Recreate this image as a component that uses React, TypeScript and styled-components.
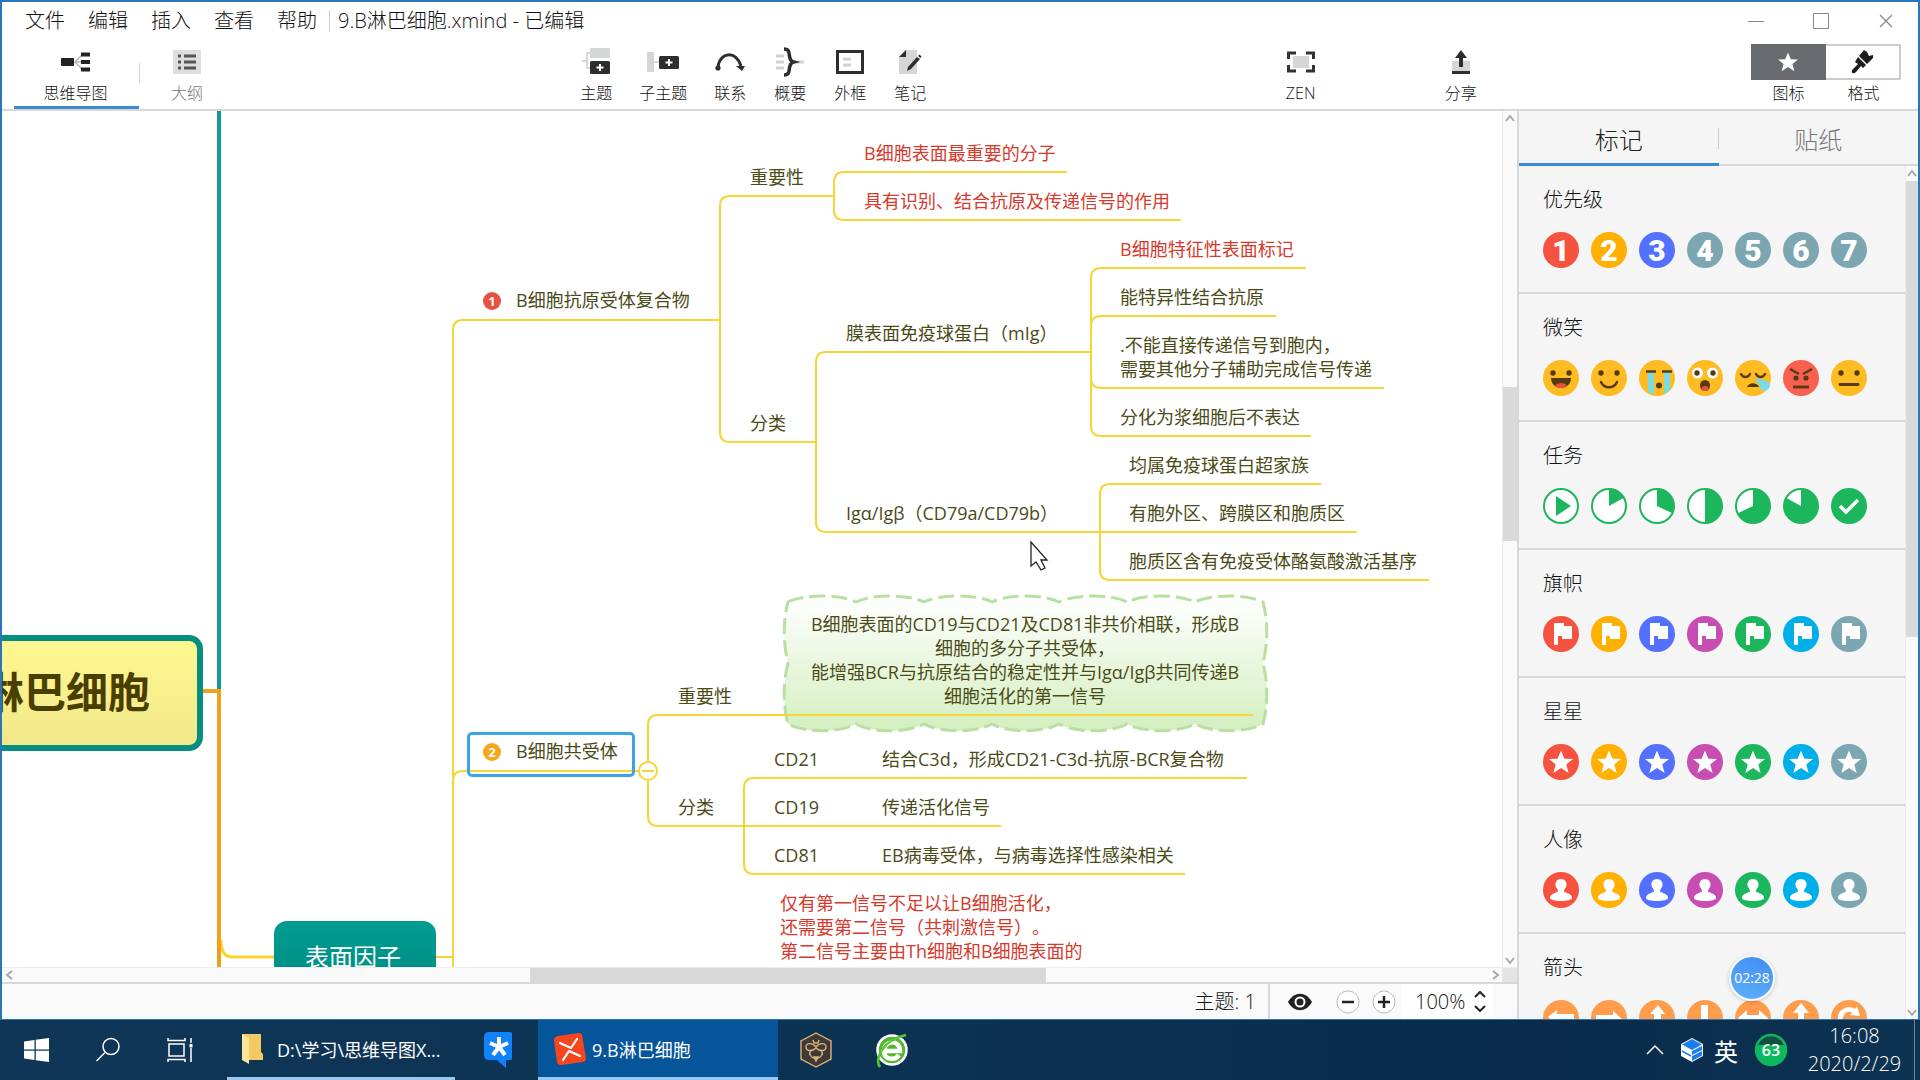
import React from "react";
import styled, { createGlobalStyle, css } from "styled-components";

const GlobalStyle = createGlobalStyle`
  * { box-sizing: border-box; }
  body { margin: 0; overflow: hidden; }
  button, input {
    font: inherit;
    color: inherit;
    margin: 0;
    padding: 0;
    border: 0;
    background: none;
  }
  svg { display: block; flex: none; }
`;

const LINE = "#f6d637";
const INK = "#4b4b17";
const RED = "#d63a2c";
const RULE = "#d8d8d8";
const FONT = `"Open Sans", "Noto Sans CJK SC", sans-serif`;

/* ---------- Shell ---------- */

const Screen = styled.div`
  position: relative;
  display: flex;
  flex-direction: column;
  height: 100vh;
  font-family: ${FONT};
  font-weight: 300;
  color: #111;
  background: #fff;
  overflow: hidden;
  text-spacing-trim: space-all;
`;

const AppWindow = styled.div`
  flex: 1;
  min-height: 0;
  display: flex;
  flex-direction: column;
  border: solid #2a74b8;
  border-width: 2px 2px 1px 2px;
`;

const Header = styled.header`
  flex: none;
  border-bottom: 2px solid ${RULE};
`;

const TitleRow = styled.div`
  display: flex;
  align-items: center;
  height: 36px;
  padding: 2px 0 0 23px;
  font-size: 20px;
  line-height: 28px;
`;

const Menu = styled.nav`
  display: flex;
  gap: 23px;
`;

const FileTitle = styled.h1`
  flex: 1;
  display: flex;
  align-items: center;
  gap: 8px;
  margin: 0 0 0 12px;
  font-size: 20px;
  font-weight: 300;
  white-space: nowrap;
  &::before {
    content: "";
    width: 1px;
    height: 22px;
    background: #ccc;
  }
`;

const WindowButton = styled.button`
  display: grid;
  place-items: center;
  width: 65px;
  height: 34px;
`;

const Toolbar = styled.div`
  display: flex;
  padding: 0 17px 0 12px;
  height: 71px;
`;

const Spacer = styled.div<{ $grow: number }>`
  flex: ${(p) => p.$grow} 0 0;
`;

const ToolButton = styled.button<{ $muted?: boolean }>`
  display: flex;
  flex-direction: column;
  align-items: center;
  gap: 2px;
  min-width: 60px;
  padding: 6px 13px 0;
  font-size: 16px;
  line-height: 22px;
  white-space: nowrap;
  color: ${(p) => (p.$muted ? "#777" : "#111")};
`;

const IconSlot = styled.span`
  display: grid;
  place-items: center;
  height: 36px;
`;

const ViewTab = styled(ToolButton)<{ $active?: boolean }>`
  width: ${(p) => (p.$active ? "125px" : "96px")};
  padding: 6px 2px 0 0;
  border-bottom: 3px solid ${(p) => (p.$active ? "#3b8ad2" : "transparent")};
`;

const TabRule = styled.span`
  width: 1px;
  height: 20px;
  margin-top: 25px;
  background: #d4d4d4;
`;

const ToggleButton = styled.button<{ $active?: boolean }>`
  display: flex;
  flex-direction: column;
  align-items: center;
  gap: 2px;
  width: 75px;
  padding-top: 6px;
  font-size: 16px;
  line-height: 22px;
  ${IconSlot} {
    width: 100%;
    border: 2px solid ${(p) => (p.$active ? "#696c6e" : "#ccc")};
    border-left-width: ${(p) => (p.$active ? "2px" : "0")};
    background: ${(p) => (p.$active ? "#696c6e" : "#fff")};
  }
`;

const Body = styled.div`
  flex: 1;
  min-height: 0;
  display: flex;
`;

const Workspace = styled.main`
  flex: 1;
  min-width: 0;
  display: flex;
  flex-direction: column;
`;

const CanvasRow = styled.div`
  flex: 1;
  min-height: 0;
  display: flex;
`;

/* ---------- Scroll bars ---------- */

const VBar = styled.div<{ $w: number }>`
  display: flex;
  flex-direction: column;
  align-items: center;
  width: ${(p) => p.$w}px;
  background: #fafafa;
  border-left: 1px solid #ececec;
`;

const HBar = styled.div`
  display: flex;
  align-items: center;
  height: 15px;
  background: #fafafa;
  border-top: 1px solid #ececec;
`;

const Thumb = styled.div<{ $grow: number }>`
  flex: ${(p) => p.$grow} 0 0;
  align-self: stretch;
  background: #d9d9d9;
`;

const Track = styled.div<{ $grow: number }>`
  flex: ${(p) => p.$grow} 0 0;
`;

const Corner = styled.span`
  width: 15px;
  align-self: stretch;
  background: #e4e4e4;
`;

const ScrollArrow = styled.button`
  display: grid;
  place-items: center;
  width: 15px;
  height: 15px;
  flex: none;
`;

/* ---------- Mind map ---------- */

const Canvas = styled.section`
  position: relative;
  flex: 1;
  min-width: 0;
  overflow: hidden;
`;

const Board = styled.div`
  position: absolute;
  left: -2px;
  top: -111px;
  width: 1502px;
  height: 1080px;
  color: ${INK};
  font-size: 18px;
  font-weight: 400;
  line-height: 24px;
`;

const Wires = styled.svg`
  position: absolute;
  left: 0;
  top: 0;
`;

const Topic = styled.div<{ $x: number; $y: number; $red?: boolean; $w?: number }>`
  position: absolute;
  left: ${(p) => p.$x}px;
  top: ${(p) => p.$y}px;
  white-space: pre;
  ${(p) => p.$red && css`color: ${RED};`}
  ${(p) => p.$w && css`width: ${p.$w}px; text-align: center;`}
`;

const RootTopic = styled.div`
  position: absolute;
  left: -98px;
  top: 635px;
  width: 301px;
  height: 116px;
  display: flex;
  align-items: center;
  justify-content: flex-end;
  padding: 0 47px 3px 0;
  border: 6px solid #068f80;
  border-radius: 14px;
  background: linear-gradient(#fff890, #f1e78b);
  color: #4b3f00;
  font-size: 42px;
  font-weight: 700;
  white-space: nowrap;
`;

const MainTopic = styled.div`
  position: absolute;
  left: 274px;
  top: 921px;
  width: 162px;
  height: 72px;
  display: flex;
  align-items: center;
  justify-content: center;
  padding-right: 4px;
  border-radius: 13px;
  background: linear-gradient(#009c92, #008c80);
  color: #fff;
  font-size: 24px;
`;

const SelectionBox = styled.div`
  position: absolute;
  left: 467px;
  top: 732px;
  width: 168px;
  height: 45px;
  border: 3px solid #3da5e6;
  border-radius: 5px;
`;

const Badge = styled.span<{ $x: number; $y: number; $bg: string }>`
  position: absolute;
  left: ${(p) => p.$x}px;
  top: ${(p) => p.$y}px;
  width: 18px;
  height: 18px;
  border-radius: 50%;
  background: ${(p) => p.$bg};
  color: #fff;
  font-size: 13px;
  font-weight: 700;
  line-height: 18px;
  text-align: center;
`;

/* ---------- Status bar ---------- */

const StatusBar = styled.footer`
  display: flex;
  align-items: center;
  justify-content: flex-end;
  height: 37px;
  padding-right: 24px;
  border-top: 2px solid ${RULE};
  background: #fafafa;
  font-size: 20px;
  line-height: 28px;
`;

const TopicCount = styled.span`
  display: flex;
  align-items: center;
  height: 100%;
  padding-right: 12px;
  border-right: 2px solid ${RULE};
`;

const StatusButton = styled.button<{ $w: number }>`
  display: grid;
  place-items: center;
  width: ${(p) => p.$w}px;
  height: 100%;
`;

const ZoomBox = styled.label`
  display: flex;
  align-items: center;
  height: 100%;
  width: 91px;
  padding-left: 13px;
  background: #fff;
  input { width: 53px; outline: 0; }
`;

const Stepper = styled.span`
  display: flex;
  flex-direction: column;
  gap: 7px;
  margin-left: 6px;
`;

/* ---------- Marker panel ---------- */

const Panel = styled.aside`
  display: flex;
  flex-direction: column;
  width: 401px;
  border-left: 2px solid ${RULE};
  background: #f5f5f5;
`;

const PanelTabs = styled.div`
  flex: none;
  display: flex;
  height: 55px;
  border-bottom: 2px solid ${RULE};
`;

const PanelTab = styled.button<{ $active?: boolean }>`
  position: relative;
  flex: 1;
  height: 55px;
  padding-top: 3px;
  font-size: 24px;
  line-height: 52px;
  color: ${(p) => (p.$active ? "#222" : "#777")};
  border-bottom: 3px solid ${(p) => (p.$active ? "#3b8ad2" : "transparent")};
  ${(p) =>
    p.$active &&
    css`
      &::after {
        content: "";
        position: absolute;
        right: 0;
        top: 17px;
        width: 1px;
        height: 21px;
        background: #ccc;
      }
    `}
`;

const PanelScroll = styled.div`
  flex: 1;
  min-height: 0;
  display: flex;
`;

const Groups = styled.div`
  flex: 1;
  overflow: hidden;
`;

const Group = styled.section`
  padding: 20px 0 24px 24px;
  border-bottom: 2px solid ${RULE};
  h2 {
    margin: 0 0 18px;
    font-size: 20px;
    font-weight: 300;
    line-height: 28px;
  }
`;

const MarkerRow = styled.div`
  display: flex;
  gap: 12px;
`;

const MarkerButton = styled.button`
  width: 36px;
  height: 36px;
`;

const Priority = styled.span<{ $bg: string }>`
  display: block;
  width: 36px;
  height: 36px;
  border-radius: 50%;
  background: ${(p) => p.$bg};
  color: #fff;
  font-family: Roboto, "Open Sans", sans-serif;
  font-size: 30px;
  font-weight: 900;
  line-height: 37px;
  text-align: center;
`;

/* ---------- Taskbar ---------- */

const Taskbar = styled.div`
  flex: none;
  display: flex;
  align-items: stretch;
  height: 60px;
  background: linear-gradient(90deg, #0f3656 0%, #0c3252 50%, #0a2b4b 80%, #0d3352 100%);
  color: #fff;
  font-size: 18px;
`;

const TaskIcon = styled.button<{ $w?: number }>`
  display: grid;
  place-items: center;
  width: ${(p) => p.$w ?? 75}px;
`;

const TaskItem = styled.button<{ $active?: boolean }>`
  display: flex;
  align-items: center;
  gap: ${(p) => (p.$active ? "5px" : "14px")};
  width: ${(p) => (p.$active ? "240px" : "228px")};
  margin-left: ${(p) => (p.$active ? "0" : "11px")};
  padding: 1px 0 0 15px;
  border-bottom: 3px solid #9bc8f0;
  background: ${(p) => (p.$active ? "#06559b" : "none")};
  font-weight: 400;
  white-space: nowrap;
`;

const Tray = styled.div`
  flex: 1;
  display: flex;
  align-items: center;
  justify-content: flex-end;
`;

const Ime = styled.span`
  margin: 0 16px 0 3px;
  font-size: 24px;
  font-weight: 400;
`;

const Clock = styled.time`
  display: flex;
  flex-direction: column;
  align-items: center;
  width: 95px;
  margin: 0 12px 0 19px;
  font-size: 20px;
  line-height: 28px;
`;

const DesktopEdge = styled.span`
  width: 6px;
  align-self: stretch;
  border-left: 1px solid #6f8799;
`;

const Timer = styled.div`
  position: absolute;
  right: 145px;
  bottom: 79px;
  width: 46px;
  height: 46px;
  border: 2px solid #f4fbff;
  border-radius: 50%;
  background: linear-gradient(200deg, #3f8df5, #5fb0f7);
  box-shadow: 0 1px 4px rgba(0, 0, 0, 0.2);
  color: #fff;
  font-size: 14px;
  font-weight: 400;
  line-height: 42px;
  text-align: center;
`;

/* ---------- Drawings ---------- */

const Chevron = ({ dir }: { dir: "up" | "down" | "left" | "right" }) => {
  const d = { up: "M2 8 6 3 10 8", down: "M2 4 6 9 10 4", left: "M8 2 3 6 8 10", right: "M4 2 9 6 4 10" }[dir];
  return (
    <svg width="12" height="12" fill="none" stroke="#a9a9a9" strokeWidth="2">
      <path d={d} />
    </svg>
  );
};

const MapViewIcon = () => (
  <svg width="30" height="22">
    <path d="M12 11h9M14 11l7-7M14 11l7 7" stroke="#bbb" strokeWidth="1.500" fill="none" />
    <rect x="0" y="7" width="13" height="8" rx="1" fill="#222" />
    <path d="M20 3.500h9M20 11h9M20 18.500h9" stroke="#222" strokeWidth="4" />
  </svg>
);

const OutlineIcon = () => (
  <svg width="28" height="24">
    <rect width="28" height="24" fill="#dedede" />
    <path d="M5 6h3M5 12h3M5 18h3M11 6h12M11 12h12M11 18h12" stroke="#555" strokeWidth="3" />
  </svg>
);

const TopicIcon = () => (
  <svg width="28" height="28">
    <path d="M0 13h5M9 5H5v15h4" stroke="#ccc" strokeWidth="1.500" fill="none" />
    <rect x="8" y="0" width="20" height="10" rx="1" fill="#d5d6d6" />
    <rect x="8" y="13" width="20" height="13" rx="1.500" fill="#2e2e2e" />
    <path d="M18 16v7M14.500 19.500h7" stroke="#fff" strokeWidth="2" />
  </svg>
);

const SubtopicIcon = () => (
  <svg width="32" height="22">
    <rect x="0" y="1" width="7" height="20" fill="#d5d6d6" />
    <path d="M7 11h6" stroke="#ccc" strokeWidth="1.500" />
    <rect x="12" y="5" width="20" height="13" rx="1.500" fill="#2e2e2e" />
    <path d="M22 8v7M18.500 11.500h7" stroke="#fff" strokeWidth="2" />
  </svg>
);

const RelationIcon = () => (
  <svg width="30" height="20">
    <path d="M3 15C5-1 22-1 26 14" stroke="#2e2e2e" strokeWidth="3" fill="none" />
    <circle cx="3" cy="16" r="2.600" fill="#2e2e2e" />
    <path d="M21 14h9l-3 5z" fill="#2e2e2e" />
  </svg>
);

const SummaryIcon = () => (
  <svg width="28" height="30">
    <path d="M0 9h8M0 15h8M0 21h8M19 15h9" stroke="#d2d2d2" strokeWidth="3" />
    <path d="M8 2c9 0 2 11 9.500 13C10 17 17 28 8 28" stroke="#2e2e2e" strokeWidth="3.500" fill="none" />
  </svg>
);

const BoundaryIcon = () => (
  <svg width="28" height="24">
    <rect x="1.500" y="1.500" width="25" height="21" fill="#fff" stroke="#2e2e2e" strokeWidth="3" />
    <path d="M7 9h8M7 15h8" stroke="#d2d2d2" strokeWidth="3" />
  </svg>
);

const NoteIcon = () => (
  <svg width="24" height="26">
    <path d="M7 1h12v24H1V8z" fill="#d5d6d6" />
    <path d="M1 8h7V1z" fill="#2e2e2e" />
    <path d="M9 22l1-4L19 8l3 2-9 10z" fill="#2e2e2e" />
    <path d="M20 7l1.500-1.500 2 2L22.500 9z" fill="#2e2e2e" />
  </svg>
);

const ZenIcon = () => (
  <svg width="28" height="22">
    <rect x="6" y="5" width="16" height="12" fill="#d5d6d6" />
    <path d="M9 2H1.500v6M19 2h7.500v6M9 20H1.500v-6M19 20h7.500v-6" stroke="#333" strokeWidth="3" fill="none" />
  </svg>
);

const ShareIcon = () => (
  <svg width="20" height="26">
    <rect x="1" y="12" width="18" height="10" fill="#d5d6d6" />
    <rect x="1" y="22" width="18" height="3" fill="#2e2e2e" />
    <path d="M10 1l6 8h-4v9H8V9H4z" fill="#2e2e2e" />
  </svg>
);

const STAR = "M0-10 2.800-3.200 10-3 4.400 1.600 6.400 8.800 0 4.600-6.400 8.800-4.400 1.600-10-3-2.800-3.200z";

const StarIcon = () => (
  <svg width="22" height="20" viewBox="-11 -10.500 22 20">
    <path d={STAR} fill="#fff" />
  </svg>
);

const BrushIcon = () => (
  <svg width="24" height="24" fill="#1d1d1d">
    <path d="M14 0l3 2 2 4 4-1 0 3-6 6-8-8z" />
    <path d="M8 7l8 8-3 3-2-2-5 6c-3 3-6 0-3-3l5-5-3-2z" />
  </svg>
);

const GREEN = "#1cb65d";
const TONES = ["#f5533f", "#ffb000", "#5470ff", "#c74db3", GREEN, "#00aeea", "#7ca7b2"];

const Disc = ({ fill, children }: { fill: string; children?: React.ReactNode }) => (
  <svg width="36" height="36" viewBox="-18 -18 36 36">
    <circle r="18" fill={fill} />
    {children}
  </svg>
);

const Eyes = () => (
  <g fill="#553b10">
    <circle cx="-8" cy="-5" r="2.700" />
    <circle cx="8" cy="-5" r="2.700" />
  </g>
);

const BROWN = "#553b10";
const AMBER = "#ffbb22";

const smileys = [
  ["大笑", <Disc fill={AMBER}><Eyes /><path d="M-10 0H10C10 13-10 13-10 0z" fill={BROWN} /><path d="M-6 8c2-4 10-4 12 0-4 3-8 3-12 0z" fill="#e8503c" /></Disc>],
  ["微笑", <Disc fill={AMBER}><Eyes /><path d="M-8 4C-5 11 5 11 8 4" fill="none" stroke={BROWN} strokeWidth="2.500" strokeLinecap="round" /></Disc>],
  ["大哭", <Disc fill={AMBER}><path d="M-9-6h6v22l-6-1.500zM7-6h6v18l-6 4z" fill="#7adbe0" /><path d="M-11-6.500H-1M5-6.500H15" stroke={BROWN} strokeWidth="2.500" /><circle cx="2" cy="7.500" r="3" fill={BROWN} /></Disc>],
  ["惊讶", <Disc fill={AMBER}><circle cx="-7.500" cy="-5" r="5.500" fill="#fff" /><circle cx="7.500" cy="-5" r="5.500" fill="#fff" /><Eyes /><ellipse cy="7.500" rx="5" ry="5.500" fill={BROWN} /><ellipse cy="10.500" rx="3.500" ry="2.500" fill="#e8503c" /></Disc>],
  ["难过", <Disc fill={AMBER}><path d="M-12-4c2 4 7 4 9 0M3-4c2 4 7 4 9 0" fill="none" stroke={BROWN} strokeWidth="2.400" strokeLinecap="round" /><path d="M-6 9c2-5 10-5 12 0z" fill={BROWN} /><path d="M1 0c8 1 15 2 16 7-1 6-6 7-8 5C6 9 5 4 1 0z" fill="#7adbe0" /></Disc>],
  ["生气", <Disc fill="#f9604f"><path d="M-11-9l9 5M11-9l-9 5" stroke={BROWN} strokeWidth="2.400" /><circle cx="-5" cy="0" r="2.600" fill={BROWN} /><circle cx="5" cy="0" r="2.600" fill={BROWN} /><path d="M-8 9H8" stroke={BROWN} strokeWidth="2.800" /></Disc>],
  ["平静", <Disc fill={AMBER}><Eyes /><path d="M-9 6.500H9" stroke={BROWN} strokeWidth="2.800" strokeLinecap="round" /></Disc>],
] as [string, React.ReactNode][];

const Pie = ({ part }: { part: number }) => {
  const a = part * Math.PI * 2;
  const end = `${17 * Math.sin(a)} ${-17 * Math.cos(a)}`;
  return (
    <svg width="36" height="36" viewBox="-18 -18 36 36">
      <circle r="17" fill="#fff" stroke={GREEN} strokeWidth="2" />
      <path d={`M0 0V-17A17 17 0 ${part > 0.5 ? 1 : 0} 1 ${end}z`} fill={GREEN} />
    </svg>
  );
};

const tasks = [
  ["开始", <svg width="36" height="36" viewBox="-18 -18 36 36"><circle r="17" fill="#fff" stroke={GREEN} strokeWidth="2" /><path d="M-5-10 10 0-5 10z" fill={GREEN} /></svg>],
  ["八分之一", <Pie part={0.17} />],
  ["八分之三", <Pie part={0.32} />],
  ["一半", <Pie part={0.5} />],
  ["八分之五", <Pie part={0.68} />],
  ["八分之七", <Pie part={0.83} />],
  ["完成", <Disc fill={GREEN}><path d="M-9 0-3 6 9-6" fill="none" stroke="#fff" strokeWidth="3.500" /></Disc>],
] as [string, React.ReactNode][];

const flag = <path d="M-7-11H3v3h8V5H1V2H-3V11H-7z" fill="#fff" />;
const star = <path d={STAR} fill="#fff" transform="translate(0 0.500) scale(1.200)" />;
const person = <path d="M0-11c4 0 6 3 5.500 6.500C5-2 3-1 3 1c0 2 8 2 8 7 0 2-5 3-11 3s-11-1-11-3c0-5 8-5 8-7 0-2-2-3-2.500-5.500C-6-8-4-11 0-11z" fill="#fff" />;

const ARROW = "M-13-1-4-8v4H13v7H-4V7z";
const arrowShapes = [
  <path d={ARROW} />,
  <path d={ARROW} transform="rotate(180)" />,
  <path d={ARROW} transform="rotate(90)" />,
  <path d={ARROW} transform="rotate(-90)" />,
  <path d="M-15 0-6-8v5H6v-5L15 0 6 8V3H-6V8z" />,
  <path d="M0-15 8-5H3V5H8L0 15-8 5H-3V-5H-8z" />,
  <path d="M-11 2A11 11 0 0 1 6-9L8-12 11-2 1-3 3-6A7 7 0 0 0-6 2 7 7 0 0 0 6 6L9 9A11 11 0 0 1-11 2z" />,
];

const groups: { title: string; items: [string, React.ReactNode][] }[] = [
  {
    title: "优先级",
    items: ["#f5533f", "#ffb000", "#5470ff", "#7ca7b2", "#7ca7b2", "#7ca7b2", "#7ca7b2"].map((c, i) => [
      `优先级 ${i + 1}`,
      <Priority $bg={c}>{i + 1}</Priority>,
    ]),
  },
  { title: "微笑", items: smileys },
  { title: "任务", items: tasks },
  { title: "旗帜", items: TONES.map((c, i) => [`旗帜 ${i + 1}`, <Disc fill={c}>{flag}</Disc>]) },
  { title: "星星", items: TONES.map((c, i) => [`星星 ${i + 1}`, <Disc fill={c}>{star}</Disc>]) },
  { title: "人像", items: TONES.map((c, i) => [`人像 ${i + 1}`, <Disc fill={c}>{person}</Disc>]) },
  {
    title: "箭头",
    items: arrowShapes.map((a, i) => [`箭头 ${i + 1}`, <Disc fill="#ff9d4d"><g fill="#fff">{a}</g></Disc>]),
  },
];

/* A branch leaves the vertical trunk at x, turns at height y and runs to x2. */
const Branch = ({ x, from, y, x2 }: { x: number; from: number; y: number; x2: number }) => {
  const r = y > from ? -10 : 10;
  return <path d={`M${x} ${from}V${y + r}Q${x} ${y} ${x + 10} ${y}H${x2}`} />;
};

const branches = [
  [453, 957, 320, 720],
  [453, 957, 771, 648],
  [720, 320, 196, 834],
  [720, 320, 442, 816],
  [834, 196, 172, 1067],
  [834, 196, 220, 1181],
  [816, 442, 352, 1091],
  [816, 442, 532, 1100],
  [1091, 352, 268, 1306],
  [1091, 352, 316, 1276],
  [1091, 352, 388, 1384],
  [1091, 352, 436, 1311],
  [1100, 532, 484, 1321],
  [1100, 532, 580, 1429],
  [648, 771, 715, 1253],
  [648, 771, 826, 1001],
  [744, 826, 778, 1247],
  [744, 826, 874, 1185],
];

const topics: { x: number; y: number; text: string; red?: boolean; w?: number }[] = [
  { x: 864, y: 141, text: "B细胞表面最重要的分子", red: true },
  { x: 864, y: 189, text: "具有识别、结合抗原及传递信号的作用", red: true },
  { x: 750, y: 165, text: "重要性" },
  { x: 516, y: 288, text: "B细胞抗原受体复合物" },
  { x: 750, y: 411, text: "分类" },
  { x: 846, y: 321, text: "膜表面免疫球蛋白（mIg）" },
  { x: 846, y: 501, text: "Igα/Igβ（CD79a/CD79b）" },
  { x: 1120, y: 237, text: "B细胞特征性表面标记", red: true },
  { x: 1120, y: 285, text: "能特异性结合抗原" },
  { x: 1120, y: 333, text: ".不能直接传递信号到胞内，\n需要其他分子辅助完成信号传递" },
  { x: 1120, y: 405, text: "分化为浆细胞后不表达" },
  { x: 1129, y: 453, text: "均属免疫球蛋白超家族" },
  { x: 1129, y: 501, text: "有胞外区、跨膜区和胞质区" },
  { x: 1129, y: 549, text: "胞质区含有免疫受体酪氨酸激活基序" },
  { x: 516, y: 739, text: "B细胞共受体" },
  { x: 678, y: 684, text: "重要性" },
  { x: 678, y: 795, text: "分类" },
  {
    x: 785,
    y: 612,
    w: 480,
    text: "B细胞表面的CD19与CD21及CD81非共价相联，形成B\n细胞的多分子共受体，\n能增强BCR与抗原结合的稳定性并与Igα/Igβ共同传递B\n细胞活化的第一信号",
  },
  { x: 774, y: 747, text: "CD21" },
  { x: 882, y: 747, text: "结合C3d，形成CD21-C3d-抗原-BCR复合物" },
  { x: 774, y: 795, text: "CD19" },
  { x: 882, y: 795, text: "传递活化信号" },
  { x: 774, y: 843, text: "CD81" },
  { x: 882, y: 843, text: "EB病毒受体，与病毒选择性感染相关" },
  { x: 780, y: 891, text: "仅有第一信号不足以让B细胞活化，\n还需要第二信号（共刺激信号）。\n第二信号主要由Th细胞和B细胞表面的", red: true },
];

const xs = [788, 856, 924, 992, 1059, 1127, 1195, 1263];
const cloud =
  "M788 602" +
  xs.slice(1).map((x, i) => `C${xs[i] + 16} 594 ${x - 16} 594 ${x} 602`).join("") +
  "C1268 620 1268 644 1263 663C1268 682 1268 706 1263 724" +
  xs.slice(0, 7).reverse().map((x, i) => `C${xs[7 - i] - 16} 733 ${x + 16} 733 ${x} 724`).join("") +
  "C783 706 783 682 788 663C783 644 783 620 788 602z";

const MindMap = () => (
  <Board>
    <Wires width="1502" height="1080" fill="none">
      <defs>
        <linearGradient id="cloudFill" x1="0" y1="0" x2="0" y2="1">
          <stop offset="0" stopColor="#ffffff" />
          <stop offset="1" stopColor="#d3efbf" />
        </linearGradient>
      </defs>
      <path d="M219 100V690" stroke="#169a96" strokeWidth="4" />
      <path d="M221 940Q221 957 232 957H276" stroke="#fad32c" strokeWidth="3" />
      <path d="M202 691H219V980" stroke="#f0a01c" strokeWidth="4" />
      <path d={cloud} fill="url(#cloudFill)" stroke="#b9dfa2" strokeWidth="3" strokeDasharray="16 6" />
      <g stroke={LINE} strokeWidth="2">
        <path d="M436 957H453V980M1100 532H1357" />
        {branches.map(([x, from, y, x2]) => (
          <Branch key={`${x}-${y}`} x={x} from={from} y={y} x2={x2} />
        ))}
        <circle cx="648" cy="771" r="9" fill="#fff" />
        <path d="M642 771H654" />
      </g>
    </Wires>
    <RootTopic>B淋巴细胞</RootTopic>
    <MainTopic>表面因子</MainTopic>
    <SelectionBox />
    <Badge $x={483} $y={292} $bg="#e8503f">1</Badge>
    <Badge $x={483} $y={743} $bg="#f5a81c">2</Badge>
    {topics.map((t) => (
      <Topic key={`${t.x}-${t.y}`} $x={t.x} $y={t.y} $red={t.red} $w={t.w}>
        {t.text}
      </Topic>
    ))}
    <Wires width="1502" height="1080">
      <path d="M1031 542v24l5-4 5 8 4-2-4-8h6z" fill="#fff" stroke="#222" strokeWidth="1.300" />
    </Wires>
  </Board>
);

const tools: [string, React.ReactNode][] = [
  ["主题", <TopicIcon />],
  ["子主题", <SubtopicIcon />],
  ["联系", <RelationIcon />],
  ["概要", <SummaryIcon />],
  ["外框", <BoundaryIcon />],
  ["笔记", <NoteIcon />],
];

const Tool = ({ label, icon }: { label: string; icon: React.ReactNode }) => (
  <ToolButton type="button">
    <IconSlot>{icon}</IconSlot>
    {label}
  </ToolButton>
);

export default function App() {
  return (
    <Screen>
      <GlobalStyle />
      <AppWindow>
        <Header>
          <TitleRow>
            <Menu>
              {["文件", "编辑", "插入", "查看", "帮助"].map((m) => (
                <button type="button" key={m}>{m}</button>
              ))}
            </Menu>
            <FileTitle>9.B淋巴细胞.xmind - 已编辑</FileTitle>
            <WindowButton type="button" aria-label="最小化">
              <svg width="16" height="16"><path d="M0 8.500h16" stroke="#888" /></svg>
            </WindowButton>
            <WindowButton type="button" aria-label="最大化">
              <svg width="16" height="16"><rect x="0.500" y="0.500" width="15" height="15" fill="none" stroke="#888" /></svg>
            </WindowButton>
            <WindowButton type="button" aria-label="关闭">
              <svg width="14" height="14"><path d="M1 1l12 12M13 1 1 13" stroke="#888" strokeWidth="1.300" /></svg>
            </WindowButton>
          </TitleRow>
          <Toolbar>
            <ViewTab type="button" $active>
              <IconSlot><MapViewIcon /></IconSlot>
              思维导图
            </ViewTab>
            <TabRule />
            <ViewTab type="button" $muted>
              <IconSlot><OutlineIcon /></IconSlot>
              大纲
            </ViewTab>
            <Spacer $grow={33} />
            {tools.map(([label, icon]) => (
              <Tool key={label} label={label} icon={icon} />
            ))}
            <Spacer $grow={33} />
            <Tool label="ZEN" icon={<ZenIcon />} />
            <Spacer $grow={10} />
            <Tool label="分享" icon={<ShareIcon />} />
            <Spacer $grow={26} />
            <ToggleButton type="button" $active>
              <IconSlot><StarIcon /></IconSlot>
              图标
            </ToggleButton>
            <ToggleButton type="button">
              <IconSlot><BrushIcon /></IconSlot>
              格式
            </ToggleButton>
          </Toolbar>
        </Header>

        <Body>
          <Workspace>
            <CanvasRow>
              <Canvas>
                <MindMap />
              </Canvas>
              <VBar $w={15}>
                <ScrollArrow type="button" aria-label="向上"><Chevron dir="up" /></ScrollArrow>
                <Track $grow={261} />
                <Thumb $grow={154} />
                <Track $grow={411} />
                <ScrollArrow type="button" aria-label="向下"><Chevron dir="down" /></ScrollArrow>
              </VBar>
            </CanvasRow>
            <HBar>
              <ScrollArrow type="button" aria-label="向左"><Chevron dir="left" /></ScrollArrow>
              <Track $grow={513} />
              <Thumb $grow={516} />
              <Track $grow={441} />
              <ScrollArrow type="button" aria-label="向右"><Chevron dir="right" /></ScrollArrow>
              <Corner />
            </HBar>
            <StatusBar>
              <TopicCount>主题: 1</TopicCount>
              <StatusButton type="button" $w={60} aria-label="预览">
                <svg width="24" height="18">
                  <path d="M0 9C6-2 18-2 24 9 18 20 6 20 0 9z" fill="#222" />
                  <circle cx="12" cy="9" r="4.500" fill="none" stroke="#fff" strokeWidth="2" />
                </svg>
              </StatusButton>
              <StatusButton type="button" $w={36} aria-label="缩小">
                <svg width="24" height="24">
                  <circle cx="12" cy="12" r="11" fill="#fff" stroke="#bbb" />
                  <path d="M6 12h12" stroke="#222" strokeWidth="2.500" />
                </svg>
              </StatusButton>
              <StatusButton type="button" $w={36} aria-label="放大">
                <svg width="24" height="24">
                  <circle cx="12" cy="12" r="11" fill="#fff" stroke="#bbb" />
                  <path d="M6 12h12M12 6v12" stroke="#222" strokeWidth="2.500" />
                </svg>
              </StatusButton>
              <ZoomBox>
                <input aria-label="缩放比例" defaultValue="100%" />
                <Stepper>
                  <button type="button" aria-label="增加">
                    <svg width="12" height="7"><path d="M1 6l5-5 5 5" fill="none" stroke="#222" strokeWidth="2" /></svg>
                  </button>
                  <button type="button" aria-label="减少">
                    <svg width="12" height="7"><path d="M1 1l5 5 5-5" fill="none" stroke="#222" strokeWidth="2" /></svg>
                  </button>
                </Stepper>
              </ZoomBox>
            </StatusBar>
          </Workspace>

          <Panel>
            <PanelTabs role="tablist">
              <PanelTab type="button" role="tab" aria-selected $active>标记</PanelTab>
              <PanelTab type="button" role="tab" aria-selected={false}>贴纸</PanelTab>
            </PanelTabs>
            <PanelScroll>
              <Groups>
                {groups.map((g) => (
                  <Group key={g.title}>
                    <h2>{g.title}</h2>
                    <MarkerRow>
                      {g.items.map(([name, icon]) => (
                        <MarkerButton type="button" key={name} aria-label={name}>{icon}</MarkerButton>
                      ))}
                    </MarkerRow>
                  </Group>
                ))}
              </Groups>
              <VBar $w={13}>
                <ScrollArrow type="button" aria-label="向上"><Chevron dir="up" /></ScrollArrow>
                <Thumb $grow={455} />
                <Track $grow={367} />
                <ScrollArrow type="button" aria-label="向下"><Chevron dir="down" /></ScrollArrow>
              </VBar>
            </PanelScroll>
          </Panel>
        </Body>
      </AppWindow>

      <Timer>02:28</Timer>

      <Taskbar>
        <TaskIcon type="button" $w={72} aria-label="开始">
          <svg width="25" height="24" fill="#fff">
            <path d="M0 3.500 10.500 2v9.500H0zM11.800 1.800 25 0v11.500H11.800zM0 12.800h10.500V22L0 20.500zM11.800 12.800H25V24l-13.200-1.800z" />
          </svg>
        </TaskIcon>
        <TaskIcon type="button" $w={72} aria-label="搜索">
          <svg width="26" height="26" fill="none" stroke="#fff" strokeWidth="1.500">
            <circle cx="16" cy="9.500" r="8" />
            <path d="M10 15.500 1.500 24" />
          </svg>
        </TaskIcon>
        <TaskIcon type="button" $w={72} aria-label="任务视图">
          <svg width="26" height="24" fill="none" stroke="#fff" strokeWidth="1.500">
            <rect x="2" y="6" width="15" height="12" />
            <path d="M1 0v2.500h17V0M1 24v-2.500h17V24M24 0v5M24 10v14" />
            <path d="M24 6v3.500" strokeWidth="3" />
          </svg>
        </TaskIcon>
        <TaskItem type="button">
          <svg width="21" height="30">
            <path d="M0 0h19v18l2 2v6H0z" fill="#f3cb62" />
            <path d="M0 0l7 4v26l-7-4z" fill="#ffe59a" />
          </svg>
          D:\学习\思维导图X...
        </TaskItem>
        <TaskIcon type="button" $w={83} aria-label="星标">
          <svg width="30" height="36" viewBox="-2 0 30 36">
            <path d="M5 0h20c3 0 5 2 5 5v18c0 3-2 5-5 5h-3v8l-9-8H5c-3 0-5-2-5-5V5c0-3 2-5 5-5z" fill="#1083fa" />
            <path d="M15 15V5M15 15l9-4M15 15l6 8M15 15l-6 8M15 15l-9-4" stroke="#fff" strokeWidth="4" />
          </svg>
        </TaskIcon>
        <TaskItem type="button" $active>
          <svg width="34" height="34">
            <path d="M5 4 25 1c2 0 3 0 4 2l4 23c0 2 0 3-3 4L8 33c-2 0-3 0-4-3L1 9c0-3 1-4 4-5z" fill="#f6461f" />
            <path d="M7 11l11 5 6-9M10 28l6-9 11 5" fill="none" stroke="#fff" strokeWidth="2.200" strokeLinecap="round" strokeLinejoin="round" />
          </svg>
          9.B淋巴细胞
        </TaskItem>
        <TaskIcon type="button" aria-label="蜂巢">
          <svg width="34" height="36" fill="none" stroke="#dcb07c" strokeWidth="1.400">
            <path d="M17 1 32 9v18L17 35 2 27V9z" fill="#3f3a35" />
            <path d="M17 15c-4-5-10-4-10 0s6 5 10 1c4 4 10 3 10-1s-6-5-10 0zM13 18c-5 3-1 8 4 9 5-1 9-6 4-9M14 8l1 3h4l1-3" />
            <path d="M15 25h4l-2 4z" fill="#dcb07c" />
          </svg>
        </TaskIcon>
        <TaskIcon type="button" aria-label="浏览器">
          <svg width="34" height="36">
            <circle cx="18" cy="18" r="14.500" fill="#55b52f" stroke="#fff" strokeWidth="2.500" />
            <path d="M10 19h16c0-12-16-11-16 0 0 9 11 10 15 4" fill="none" stroke="#fff" strokeWidth="4.500" />
            <path d="M6 35C0 28 8 8 32 3" fill="none" stroke="#5cc437" strokeWidth="2.500" />
          </svg>
        </TaskIcon>
        <Tray>
          <TaskIcon type="button" $w={36} aria-label="显示隐藏的图标">
            <svg width="18" height="12"><path d="M1 10l8-8 8 8" fill="none" stroke="#fff" strokeWidth="1.500" /></svg>
          </TaskIcon>
          <TaskIcon type="button" $w={38} aria-label="存储">
            <svg width="22" height="24">
              <path d="M11 0 22 6v12l-11 6L0 18V6z" fill="#fff" />
              <path d="M11 1 21 6.500 11 12 1 6.500z" fill="#1c7df0" />
              <path d="M11 13 21 8v4l-10 5zM11 18l10-5v4.500L11 23z" fill="#1c7df0" />
              <path d="M1 13l9 5" stroke="#1c7df0" strokeWidth="1.500" />
            </svg>
          </TaskIcon>
          <Ime>英</Ime>
          <svg width="34" height="34" role="img" aria-label="63">
            <circle cx="17" cy="17" r="15" fill="#14503f" stroke="#0bb85f" strokeWidth="2.500" />
            <path d="M2 12H32A15.500 15.500 0 1 1 2 12z" fill="#0bb85f" />
            <text x="17" y="23" fill="#fff" fontSize="16" fontWeight="600" textAnchor="middle">63</text>
          </svg>
          <Clock>
            <span>16:08</span>
            <span>2020/2/29</span>
          </Clock>
          <DesktopEdge />
        </Tray>
      </Taskbar>
    </Screen>
  );
}
